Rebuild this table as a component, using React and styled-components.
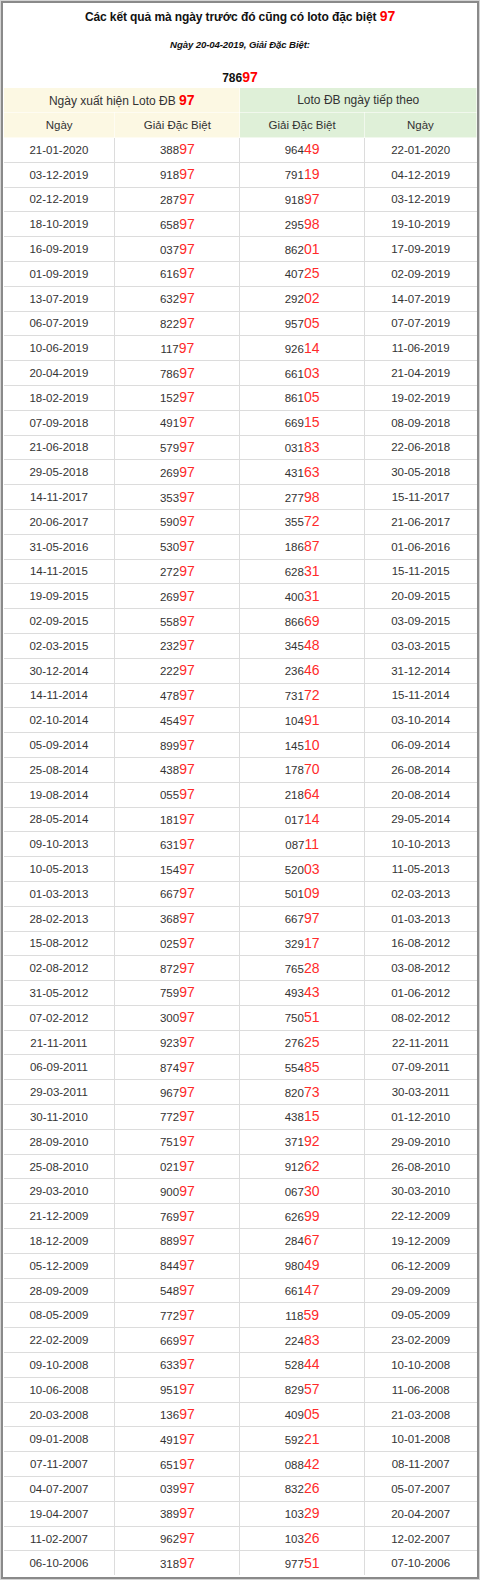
import React from 'react';
import styled, { createGlobalStyle } from 'styled-components';

const rows = [
  ['21-01-2020', '38897', '96449', '22-01-2020'],
  ['03-12-2019', '91897', '79119', '04-12-2019'],
  ['02-12-2019', '28797', '91897', '03-12-2019'],
  ['18-10-2019', '65897', '29598', '19-10-2019'],
  ['16-09-2019', '03797', '86201', '17-09-2019'],
  ['01-09-2019', '61697', '40725', '02-09-2019'],
  ['13-07-2019', '63297', '29202', '14-07-2019'],
  ['06-07-2019', '82297', '95705', '07-07-2019'],
  ['10-06-2019', '11797', '92614', '11-06-2019'],
  ['20-04-2019', '78697', '66103', '21-04-2019'],
  ['18-02-2019', '15297', '86105', '19-02-2019'],
  ['07-09-2018', '49197', '66915', '08-09-2018'],
  ['21-06-2018', '57997', '03183', '22-06-2018'],
  ['29-05-2018', '26997', '43163', '30-05-2018'],
  ['14-11-2017', '35397', '27798', '15-11-2017'],
  ['20-06-2017', '59097', '35572', '21-06-2017'],
  ['31-05-2016', '53097', '18687', '01-06-2016'],
  ['14-11-2015', '27297', '62831', '15-11-2015'],
  ['19-09-2015', '26997', '40031', '20-09-2015'],
  ['02-09-2015', '55897', '86669', '03-09-2015'],
  ['02-03-2015', '23297', '34548', '03-03-2015'],
  ['30-12-2014', '22297', '23646', '31-12-2014'],
  ['14-11-2014', '47897', '73172', '15-11-2014'],
  ['02-10-2014', '45497', '10491', '03-10-2014'],
  ['05-09-2014', '89997', '14510', '06-09-2014'],
  ['25-08-2014', '43897', '17870', '26-08-2014'],
  ['19-08-2014', '05597', '21864', '20-08-2014'],
  ['28-05-2014', '18197', '01714', '29-05-2014'],
  ['09-10-2013', '63197', '08711', '10-10-2013'],
  ['10-05-2013', '15497', '52003', '11-05-2013'],
  ['01-03-2013', '66797', '50109', '02-03-2013'],
  ['28-02-2013', '36897', '66797', '01-03-2013'],
  ['15-08-2012', '02597', '32917', '16-08-2012'],
  ['02-08-2012', '87297', '76528', '03-08-2012'],
  ['31-05-2012', '75997', '49343', '01-06-2012'],
  ['07-02-2012', '30097', '75051', '08-02-2012'],
  ['21-11-2011', '92397', '27625', '22-11-2011'],
  ['06-09-2011', '87497', '55485', '07-09-2011'],
  ['29-03-2011', '96797', '82073', '30-03-2011'],
  ['30-11-2010', '77297', '43815', '01-12-2010'],
  ['28-09-2010', '75197', '37192', '29-09-2010'],
  ['25-08-2010', '02197', '91262', '26-08-2010'],
  ['29-03-2010', '90097', '06730', '30-03-2010'],
  ['21-12-2009', '76997', '62699', '22-12-2009'],
  ['18-12-2009', '88997', '28467', '19-12-2009'],
  ['05-12-2009', '84497', '98049', '06-12-2009'],
  ['28-09-2009', '54897', '66147', '29-09-2009'],
  ['08-05-2009', '77297', '11859', '09-05-2009'],
  ['22-02-2009', '66997', '22483', '23-02-2009'],
  ['09-10-2008', '63397', '52844', '10-10-2008'],
  ['10-06-2008', '95197', '82957', '11-06-2008'],
  ['20-03-2008', '13697', '40905', '21-03-2008'],
  ['09-01-2008', '49197', '59221', '10-01-2008'],
  ['07-11-2007', '65197', '08842', '08-11-2007'],
  ['04-07-2007', '03997', '83226', '05-07-2007'],
  ['19-04-2007', '38997', '10329', '20-04-2007'],
  ['11-02-2007', '96297', '10326', '12-02-2007'],
  ['06-10-2006', '31897', '97751', '07-10-2006'],
];

const GlobalStyle = createGlobalStyle`
  html, body {
    margin: 0;
    padding: 0;
    background: #fff;
  }
  body {
    font-family: "Liberation Sans", Arial, sans-serif;
    color: #333;
  }
`;

const Frame = styled.div`
  width: 480px;
  height: 1580px;
  box-sizing: border-box;
  border: 1px solid #d4d4d4;
`;

const Panel = styled.div`
  height: 100%;
  box-sizing: border-box;
  border: 2px solid #8a8a8a;
  background: #fff;
  display: flex;
  flex-direction: column;
  overflow: hidden;
`;

const Heading = styled.div`
  height: 85px;
  flex: none;
  box-sizing: border-box;
  padding-top: 5px;
  display: flex;
  flex-direction: column;
  align-items: center;
  color: #111;
`;

const Title = styled.div`
  font-size: 12px;
  font-weight: bold;
  line-height: 16px;
  letter-spacing: -0.1px;
`;

const Subtitle = styled.div`
  margin-top: 12px;
  font-size: 9.6px;
  font-weight: bold;
  font-style: italic;
  line-height: 16px;
  letter-spacing: -0.1px;
`;

const Special = styled.div`
  margin-top: 16px;
  font-size: 12px;
  font-weight: bold;
  line-height: 16px;
`;

const Red = styled.span`
  color: ${(p) => (p.$strong ? '#f00' : '#ff2a2a')};
  font-size: ${(p) => p.$size || '14px'};
  font-weight: ${(p) => (p.$strong ? 'bold' : 'normal')};
`;

const Table = styled.table`
  width: 100%;
  border-collapse: collapse;
  table-layout: fixed;
  font-size: 11.5px;
`;

const HeadCell = styled.th`
  height: 24px;
  padding: 0;
  font-weight: normal;
  text-align: center;
  vertical-align: middle;
  color: #333;
  background: ${(p) => (p.$tone === 'green' ? '#dff0d8' : '#fcf8e3')};
  border: 1px solid rgba(255, 255, 255, 0.55);
  border-top: none;
  line-height: 16px;
  font-size: ${(p) => (p.$group ? '12px' : '11.5px')};
`;

const Cell = styled.td`
  height: 23.8px;
  padding: 0;
  text-align: center;
  vertical-align: middle;
  border: 1px solid #dcdcdc;
  line-height: 16px;
  color: #333;
`;

const Row = styled.tr`
  &:last-child td {
    border-bottom: none;
  }
  td:first-child {
    border-left: none;
  }
  td:last-child {
    border-right: none;
  }
`;

const Number = ({ value }) => (
  <>
    {value.slice(0, 3)}
    <Red>{value.slice(3)}</Red>
  </>
);

export default function App() {
  return (
    <>
      <GlobalStyle />
      <Frame>
        <Panel>
          <Heading>
            <Title>
              Các kết quả mà ngày trước đó cũng có loto đặc biệt <Red $strong $size="14px">97</Red>
            </Title>
            <Subtitle>Ngày 20-04-2019, Giải Đặc Biệt:</Subtitle>
            <Special>
              786<Red $strong $size="14px">97</Red>
            </Special>
          </Heading>
          <Table>
            <colgroup>
              <col style={{ width: 111 }} />
              <col style={{ width: 125 }} />
              <col style={{ width: 124 }} />
              <col style={{ width: 112 }} />
            </colgroup>
            <thead>
              <tr>
                <HeadCell colSpan={2} $group>
                  Ngày xuất hiện Loto ĐB <Red $strong $size="14px">97</Red>
                </HeadCell>
                <HeadCell colSpan={2} $tone="green" $group>
                  Loto ĐB ngày tiếp theo
                </HeadCell>
              </tr>
              <tr>
                <HeadCell>Ngày</HeadCell>
                <HeadCell>Giải Đặc Biệt</HeadCell>
                <HeadCell $tone="green">Giải Đặc Biệt</HeadCell>
                <HeadCell $tone="green">Ngày</HeadCell>
              </tr>
            </thead>
            <tbody>
              {rows.map(([day, prize, next, nextDay]) => (
                <Row key={day + prize}>
                  <Cell>{day}</Cell>
                  <Cell>
                    <Number value={prize} />
                  </Cell>
                  <Cell>
                    <Number value={next} />
                  </Cell>
                  <Cell>{nextDay}</Cell>
                </Row>
              ))}
            </tbody>
          </Table>
        </Panel>
      </Frame>
    </>
  );
}
